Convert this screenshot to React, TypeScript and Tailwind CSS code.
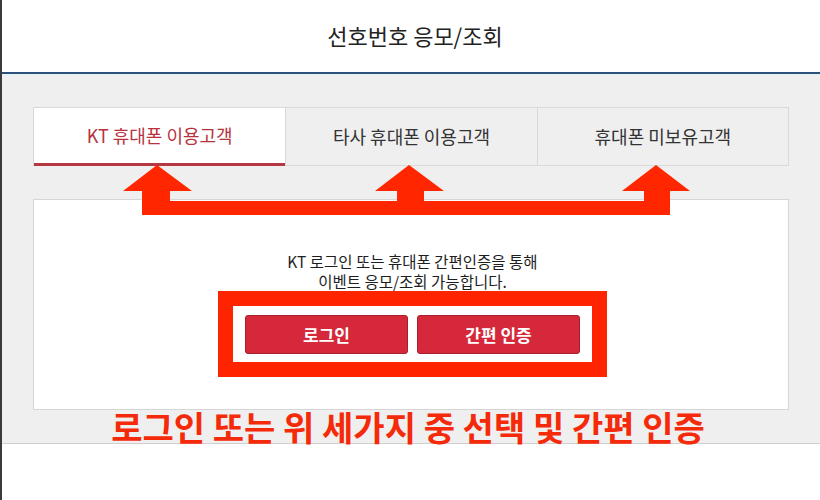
import React from "react";

const FONT = '"Noto Sans CJK KR", "Noto Sans", sans-serif';

const tabs = [
  { label: "KT 휴대폰 이용고객", active: true },
  { label: "타사 휴대폰 이용고객", active: false },
  { label: "휴대폰 미보유고객", active: false },
];

export default function App() {
  return (
    <div
      className="relative w-[820px] h-[500px] overflow-hidden bg-white border-l-2 border-[#3a3a3a]"
      style={{ fontFamily: FONT }}
    >
      {/* page header */}
      <header className="h-[74px] flex items-center justify-center border-b-2 border-[#2f5179] bg-white">
        <h1 className="text-[22px] text-[#222] pb-[2px] ml-[8px]">선호번호 응모/조회</h1>
      </header>
      <div className="h-px bg-[#def3f7]" />

      {/* main area */}
      <section className="bg-[#efefef] border-b border-[#cfcfcf] px-[31px] pt-[32px] h-[369px]">
        <div className="grid grid-cols-3 h-[59px] border border-[#d9d9d9] border-b-0">
          {tabs.map((t, i) => (
            <div
              key={t.label}
              className={
                t.active
                  ? "flex items-center justify-center bg-white border-b-[3px] border-[#b53842] text-[#b8323d] text-[18px]"
                  : "flex items-center justify-center bg-[#efefef] border-b border-[#d9d9d9] text-[#333] text-[18px] " +
                    (i > 0 ? "border-l border-l-[#d9d9d9]" : "")
              }
            >
              {t.label}
            </div>
          ))}
        </div>

        <div className="mt-[33px] h-[211px] bg-white border border-[#d6d6d6] flex flex-col items-center pt-[51px]">
          <p className="text-[15.5px] leading-[20px] text-[#1e1e1e] text-center ml-[3px]">
            KT 로그인 또는 휴대폰 간편인증을 통해
            <br />
            이벤트 응모/조회 가능합니다.
          </p>
          <div className="border-[15px] border-[#ff2400] bg-white px-[12px] pt-[9px] pb-[8px] flex gap-[9px] ml-[3px]">
            <button className="w-[163px] h-[39px] rounded-[3px] bg-[#d5283a] border border-[#a61f2c] text-white text-[17px] font-bold">
              로그인
            </button>
            <button className="w-[163px] h-[39px] rounded-[3px] bg-[#d5283a] border border-[#a61f2c] text-white text-[17px] font-bold">
              간편 인증
            </button>
          </div>
        </div>

        <p className="text-center text-[34px] leading-[33px] font-bold text-[#f52a0a] pr-[6px]">
          로그인 또는 위 세가지 중 선택 및 간편 인증
        </p>
      </section>

      {/* arrows pointing at the three tabs */}
      <svg
        className="absolute top-0 left-0 pointer-events-none"
        width="820"
        height="500"
        viewBox="0 0 820 500"
      >
        <path
          d="M140,191 H121 L155,165 L190,191 H168 V201 H395 V191 H373 L407,165 L442,191 H422 V201 H642 V191 H620 L654,165 L688,191 H668 V215 H140 Z"
          fill="#ff2600"
        />
      </svg>
    </div>
  );
}
